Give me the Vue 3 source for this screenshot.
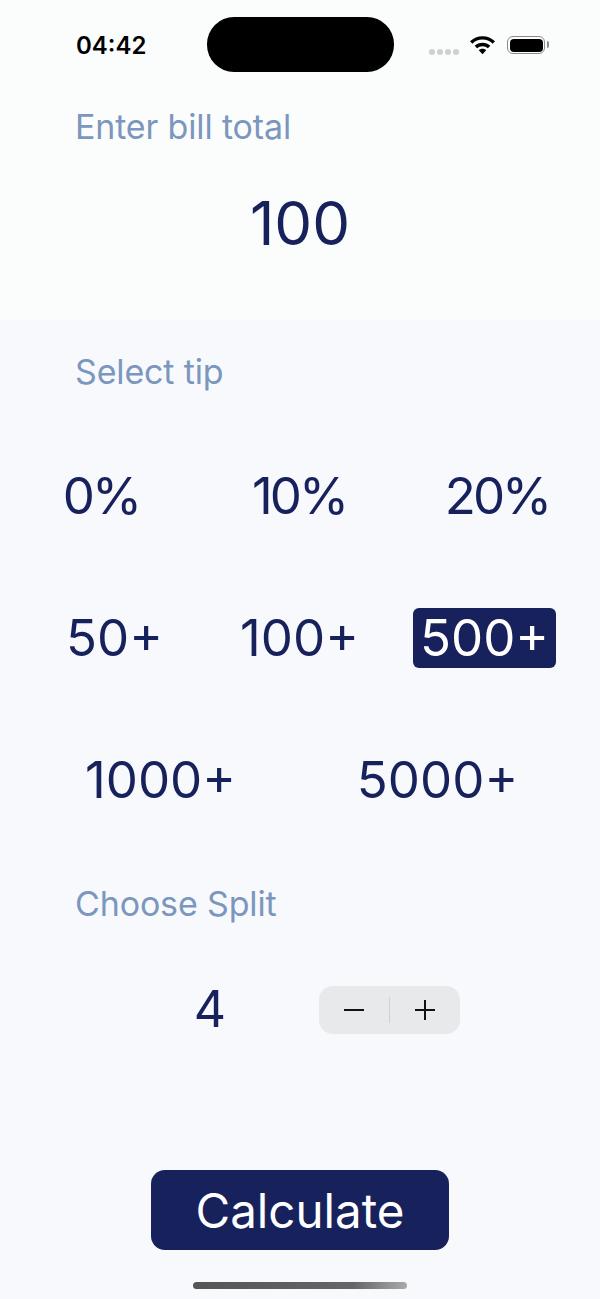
<script setup>
import { ref } from "vue";

const bill = ref("100");
const split = ref(4);
const selectedTip = ref("500+");

const tipRows = [
  { cls: "row-3", items: ["0%", "10%", "20%"] },
  { cls: "row-3b", items: ["50+", "100+", "500+"] },
  { cls: "row-2", items: ["1000+", "5000+"] },
];
</script>

<template>
  <div class="screen">
    <section class="top">
      <div class="status">
        <span class="time">04:42</span>
        <div class="island"></div>
        <div class="status-icons">
          <div class="dots"><i></i><i></i><i></i><i></i></div>
          <svg class="wifi" width="25" height="19" viewBox="0 0 24 18">
            <path d="M12 0c4.600 0 8.800 1.800 12 4.800l-2.300 2.400C19.100 4.800 15.700 3.300 12 3.300S4.900 4.800 2.300 7.200L0 4.800C3.200 1.800 7.400 0 12 0z" fill="#000" />
            <path d="M12 6.300c2.900 0 5.500 1.100 7.500 3l-2.300 2.400C15.800 10.400 14 9.600 12 9.600s-3.800.8-5.200 2.100L4.500 9.300c2-1.900 4.600-3 7.500-3z" fill="#000" />
            <path d="M12 12.200c1.400 0 2.600.5 3.500 1.400L12 17.500l-3.500-3.900c.9-.9 2.100-1.400 3.500-1.400z" fill="#000" />
          </svg>
          <div class="battery"><div class="battery-fill"></div></div>
        </div>
      </div>
      <h2 class="label first">Enter bill total</h2>
      <div class="bill">{{ bill }}</div>
    </section>

    <section class="tip">
      <h2 class="label">Select tip</h2>
      <div class="tip-rows">
        <div v-for="row in tipRows" :key="row.cls" class="tip-row" :class="row.cls">
          <div v-for="item in row.items" :key="item" class="tip-cell">
            <span class="tip-item" :class="{ active: item === selectedTip, pct: item.endsWith('%') }">{{ item }}</span>
          </div>
        </div>
      </div>
    </section>

    <section class="split">
      <h2 class="label">Choose Split</h2>
      <div class="split-row">
        <span class="split-value">{{ split }}</span>
        <div class="stepper">
          <button class="step" @click="split--">
            <svg width="22" height="22" viewBox="0 0 22 22"><path d="M1 11h20" stroke="#111" stroke-width="2" /></svg>
          </button>
          <div class="step-line"></div>
          <button class="step" @click="split++">
            <svg width="22" height="22" viewBox="0 0 22 22"><path d="M1 11h20M11 1v20" stroke="#111" stroke-width="2" /></svg>
          </button>
        </div>
      </div>
    </section>

    <div class="footer">
      <button class="calc">Calculate</button>
      <div class="home"></div>
    </div>
  </div>
</template>

<style>
html,
body {
  margin: 0;
  background: #f8f9fc;
}
</style>

<style scoped>
.screen {
  width: 600px;
  height: 1299px;
  overflow: hidden;
  background: #f8f9fc;
  font-family: Inter, "Liberation Sans", sans-serif;
  color: #17215b;
}

.top {
  height: 320px;
  background: #fbfdfd;
}

.status {
  height: 90px;
  display: flex;
  align-items: center;
  padding: 0 55px 0 76px;
  position: relative;
}

.time {
  font-size: 24px;
  font-weight: 600;
  color: #000;
}

.island {
  position: absolute;
  left: 207px;
  top: 17px;
  width: 187px;
  height: 55px;
  border-radius: 27px;
  background: #000;
}

.status-icons {
  margin-left: auto;
  display: flex;
  align-items: center;
}

.dots {
  display: flex;
  gap: 2px;
  margin-top: 14px;
  margin-right: 11px;
}

.dots i {
  width: 6px;
  height: 6px;
  border-radius: 50%;
  background: #cfd0d0;
}

.wifi {
  margin-right: 12px;
}

.battery {
  width: 38px;
  height: 18px;
  box-sizing: border-box;
  border: 1.500px solid #8a8a8a;
  border-radius: 6px;
  padding: 1.500px;
  position: relative;
}

.battery::after {
  content: "";
  position: absolute;
  right: -4.500px;
  top: 4px;
  width: 2px;
  height: 7px;
  border-radius: 0 2px 2px 0;
  background: #8a8a8a;
}

.battery-fill {
  height: 100%;
  border-radius: 4px;
  background: #000;
}

.label {
  margin: 0;
  padding-left: 75px;
  font-size: 34px;
  line-height: 44px;
  font-weight: 400;
  letter-spacing: -0.150px;
  color: #7b97bd;
}

.first {
  margin-top: 15px;
}

.bill {
  margin-top: 39px;
  text-align: center;
  font-size: 60px;
  line-height: 70px;
  font-weight: 400;
}

.tip {
  padding-top: 30px;
}

.tip-rows {
  margin-top: 72px;
  display: flex;
  flex-direction: column;
  gap: 82px;
}

.tip-row {
  display: grid;
  height: 60px;
}

.row-3 {
  grid-template-columns: repeat(3, 198px);
  padding: 0 2px;
}

.row-3b {
  grid-template-columns: repeat(3, 185px);
  padding: 0 22px;
}

.row-2 {
  grid-template-columns: repeat(2, 277px);
  padding: 0 22px;
}

.tip-cell {
  display: flex;
  justify-content: center;
}

.tip-item {
  display: block;
  padding: 0 7px;
  font-size: 51px;
  line-height: 60px;
  border-radius: 6px;
}

.pct {
  letter-spacing: -3px;
}

.active {
  background: #17215b;
  color: #fff;
}

.split {
  padding-top: 72px;
}

.split-row {
  margin-top: 60px;
  display: flex;
  align-items: center;
  height: 48px;
}

.split-value {
  width: 40px;
  margin-left: 190px;
  text-align: center;
  font-size: 50px;
  line-height: 46px;
  align-self: flex-start;
}

.stepper {
  margin-left: 89px;
  width: 141px;
  height: 48px;
  border-radius: 14px;
  background: #e8e9eb;
  display: flex;
  align-items: center;
}

.step {
  flex: 1;
  height: 100%;
  border: none;
  background: none;
  padding: 0;
  display: flex;
  align-items: center;
  justify-content: center;
}

.step-line {
  width: 1px;
  height: 26px;
  background: #d0d1d4;
}

.footer {
  margin-top: 136px;
  display: flex;
  flex-direction: column;
  align-items: center;
}

.calc {
  width: 298px;
  height: 80px;
  border: none;
  border-radius: 14px;
  background: #17215b;
  color: #fff;
  font-family: Inter, sans-serif;
  font-size: 47.500px;
  font-weight: 400;
}

.home {
  margin-top: 32px;
  width: 214px;
  height: 7px;
  border-radius: 4px;
  background: linear-gradient(90deg, #555 0%, #666 75%, #aaa 100%);
}
</style>
